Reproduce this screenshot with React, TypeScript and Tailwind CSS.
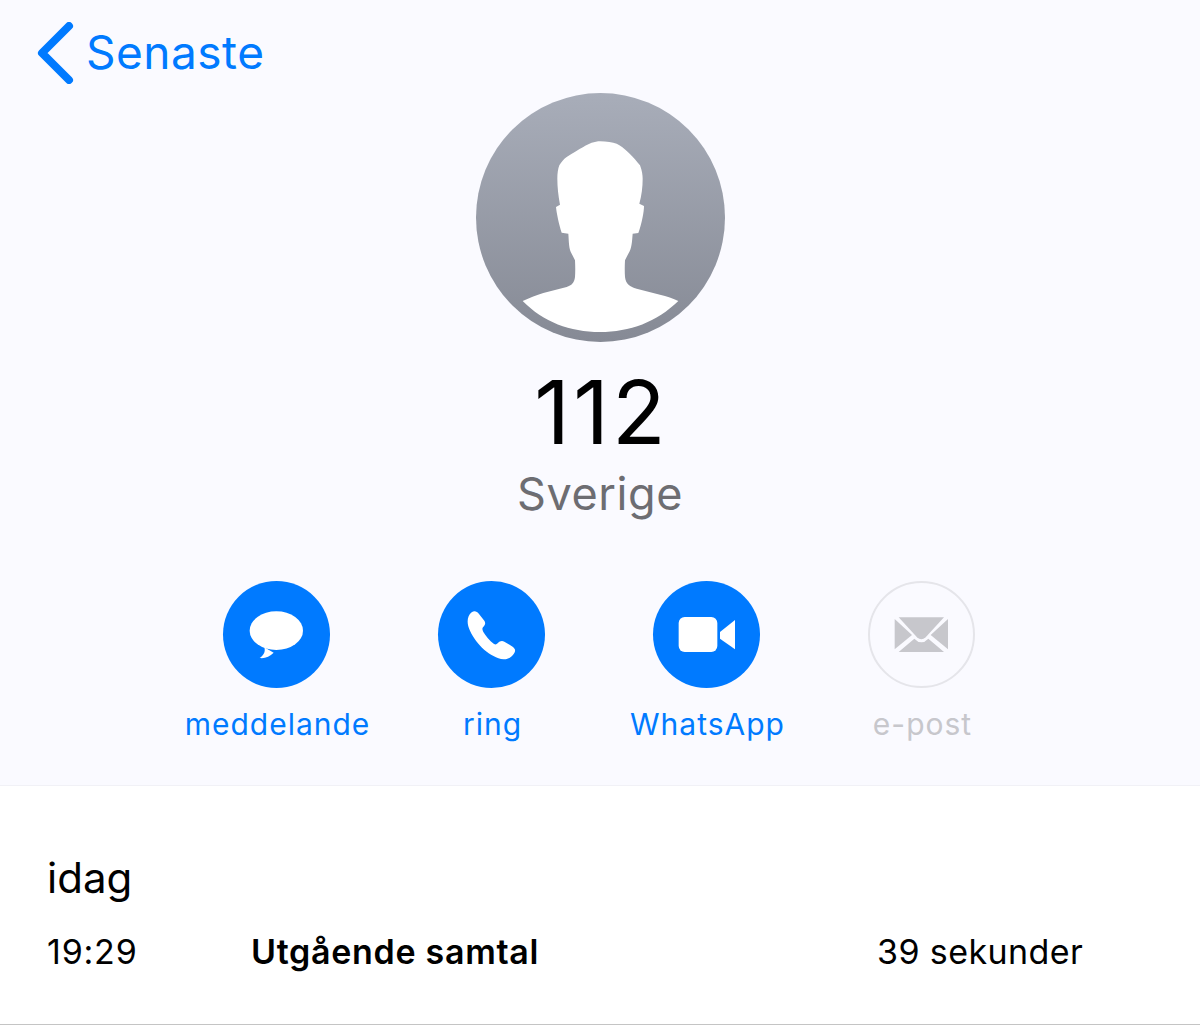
const actions = [
  { label: 'meddelande', icon: <MessageIcon />, disabled: false },
  { label: 'ring', icon: <PhoneIcon />, disabled: false },
  { label: 'WhatsApp', icon: <VideoIcon />, disabled: false },
  { label: 'e-post', icon: <MailIcon />, disabled: true },
];

function MessageIcon() {
  return (
    <svg viewBox="160 35 321 321" className="h-full w-full">
      <ellipse cx="320" cy="184" rx="80" ry="58" fill="#fff" />
      <path d="M284 234 C288 248 282 258 270 266 C286 268 300 262 312 250 Z" fill="#fff" />
    </svg>
  );
}

function PhoneIcon() {
  return (
    <svg viewBox="-51 -57 321 321" className="h-full w-full">
      <path
        d="M50 37 C58 31 66 34 72 42 L88 62 C93 70 90 76 84 82 C81 86 82 90 85 96 C92 108 104 122 116 131 C121 134 124 134 128 130 C134 124 140 121 148 125 L173 140 C181 146 182 152 178 159 C170 172 158 179 146 178 C105 172 65 135 45 92 C34 70 36 48 50 37 Z"
        fill="#fff"
      />
    </svg>
  );
}

function VideoIcon() {
  return (
    <svg viewBox="99 35 321 321" className="h-full w-full">
      <rect x="176" y="143" width="116" height="105" rx="18" fill="#fff" />
      <path d="M300 188 L345 152 V240 L300 208 Z" fill="#fff" />
    </svg>
  );
}

function MailIcon() {
  return (
    <svg viewBox="749 41 309 309" className="h-full w-full">
      <path d="M835 144 H971 L916 204 Q903 216 890 204 Z" fill="#c7c7cc" />
      <path d="M823 149 L875 197 L823 240 Z" fill="#c7c7cc" />
      <path d="M983 149 L931 197 L983 240 Z" fill="#c7c7cc" />
      <path d="M835 248 L882 208 Q903 230 924 208 L971 248 Z" fill="#c7c7cc" />
    </svg>
  );
}

function Avatar() {
  return (
    <svg viewBox="48 38 747 747" className="h-[249px] w-[249px]">
      <defs>
        <linearGradient id="avatar" x1="0" y1="0" x2="0" y2="1">
          <stop offset="0" stopColor="#a8adb9" />
          <stop offset="1" stopColor="#868a95" />
        </linearGradient>
      </defs>
      <circle cx="421.5" cy="411.5" r="373.5" fill="url(#avatar)" />
      <path
        d="M420 183 C440 183 458 186 470 190 C490 198 525 235 540 255 C546 270 548 285 548 295 C548 320 545 345 538 370 L552 377 C552 395 545 430 535 458 L518 460 C516 485 515 505 505 520 L495 540 C494 560 494 575 495 590 C497 610 510 620 530 625 L600 643 C620 648 640 654 655 662 C590 725 510 755 420 755 C330 755 250 725 188 662 C205 654 230 645 250 638 L320 620 C335 615 343 608 345 590 C346 575 346 560 345 540 L335 520 C326 505 327 485 325 460 L305 457 C297 432 290 400 288 380 L300 373 C295 345 292 320 292 295 C292 280 294 265 298 255 C305 245 312 235 320 230 C340 218 355 208 370 200 C385 190 405 183 420 183 Z"
        fill="#fff"
      />
    </svg>
  );
}

export default function App() {
  return (
    <div className="min-h-[1032px] bg-white font-['Inter',sans-serif]">
      <section className="h-[786px] border-b border-[#f1f1f6] bg-[#fafaff]">
        <div className="flex h-[93px] items-start pl-[36px] pt-[22px] text-[#007aff]">
          <svg viewBox="0 0 38 62" className="h-[62px] w-[38px]" fill="none">
            <path d="M33 4 L6 31 L33 58" stroke="#007aff" strokeWidth="8" strokeLinecap="round" strokeLinejoin="round" />
          </svg>
          <span className="ml-[12px] text-[46px] leading-[60px] tracking-[0.5px]">Senaste</span>
        </div>

        <div className="flex flex-col items-center">
          <Avatar />
          <div className="ml-[3px] mt-[22px] text-[88px] leading-[96px] tracking-[3px] text-black">112</div>
          <div className="mt-[4px] text-[45px] leading-[60px] tracking-[0.6px] text-[#6d6d72]">Sverige</div>
        </div>

        <div className="mt-[57px] grid grid-cols-4 pl-[169px] pr-[171px]">
          {actions.map((a) => (
            <div key={a.label} className="flex flex-col items-center">
              <div
                className={
                  a.disabled
                    ? 'h-[107px] w-[107px] rounded-full border-2 border-[#e5e5ea]'
                    : 'h-[107px] w-[107px] rounded-full bg-[#007aff]'
                }
              >
                {a.icon}
              </div>
              <span
                className={
                  a.disabled
                    ? 'ml-[2px] mt-[16px] text-[30px] leading-[40px] tracking-[1px] text-[#c7c7cc]'
                    : 'ml-[2px] mt-[16px] text-[30px] leading-[40px] tracking-[1px] text-[#007aff]'
                }
              >
                {a.label}
              </span>
            </div>
          ))}
        </div>
      </section>

      <section className="border-b border-[#c4c4c4] pb-[52px] pl-[47px] pt-[62px] text-black">
        <div className="text-[42px] leading-[60px]">idag</div>
        <div className="mt-[24px] flex items-center text-[34px] leading-[40px]">
          <span className="w-[204px] tracking-[0.8px]">19:29</span>
          <span className="w-[626px] font-semibold tracking-[0.7px]">Utgående samtal</span>
          <span className="tracking-[0.4px]">39 sekunder</span>
        </div>
      </section>
    </div>
  );
}
